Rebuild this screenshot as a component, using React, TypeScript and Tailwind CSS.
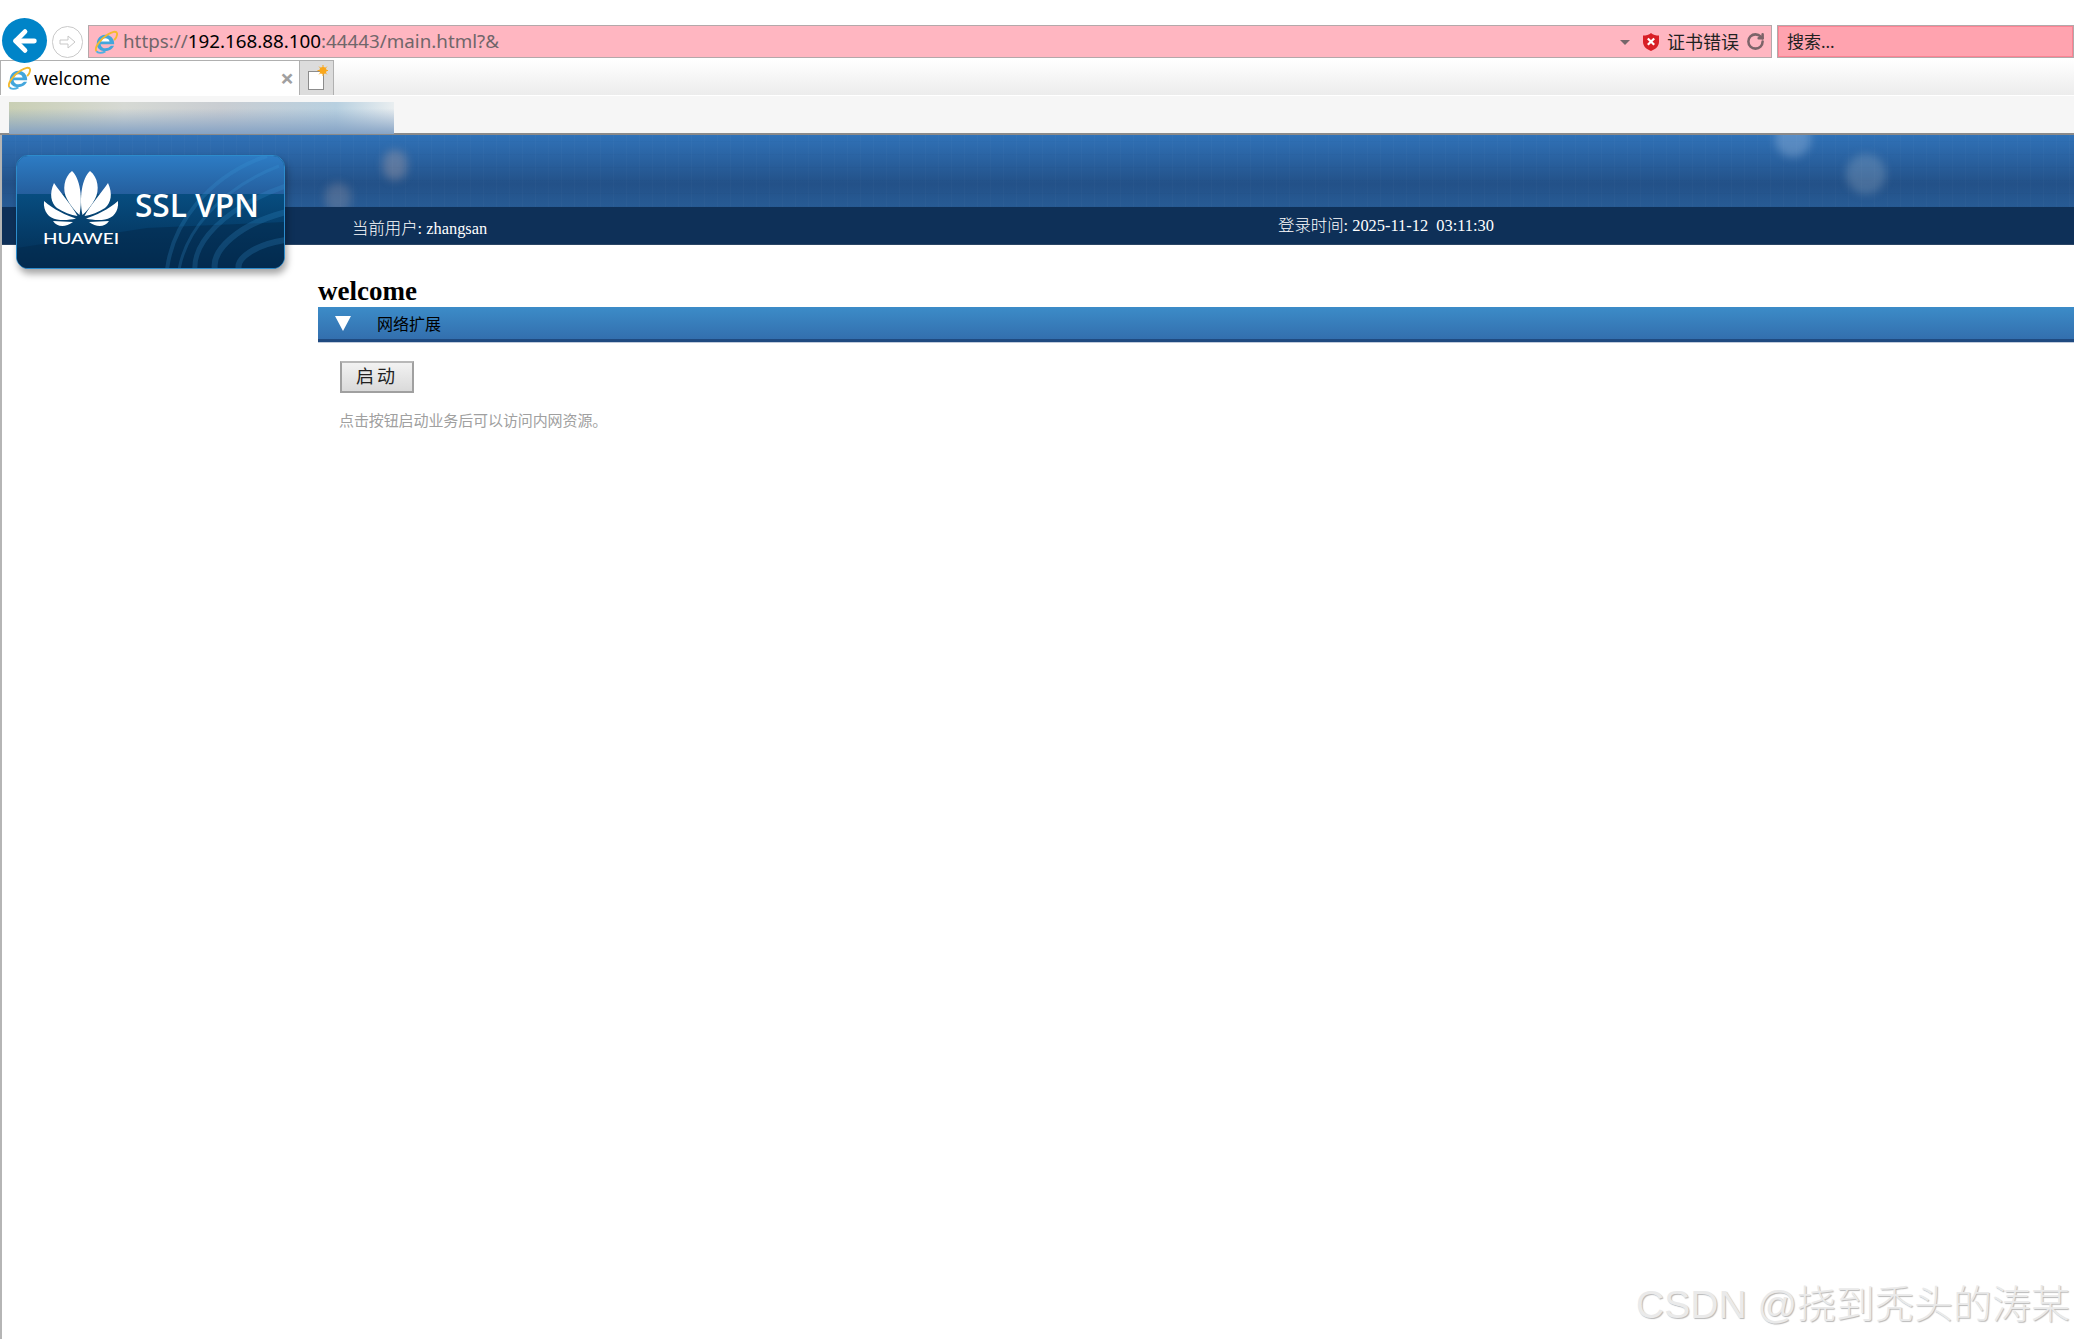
import React from 'react';
import { ArrowLeft, RotateCw } from 'lucide-react';

const uiFont = "font-['Noto_Sans','Noto_Sans_CJK_SC',sans-serif]";
const pageFont = "font-['Liberation_Serif','Noto_Sans_CJK_SC',serif]";

function IeIcon() {
  return (
    <svg width="24" height="24" viewBox="1.5 1 22 22" className="shrink-0">
      <path d="M5 9.5A8 8 0 0 1 19 9.5C19.8 11 20 12.6 20 14H7.5C8 18.5 14 19 17 15.5H19.8C17 22.5 4 22 4 13.5 4 12 4.4 10.7 5 9.5Z" fill="#43a6dc" />
      <path d="M8 11.5C8.5 7.5 15 7.5 15.8 11.5Z" fill="#fff" />
      <path d="M3.8 20.5C1 16.5 9 8.5 14 5.2 18 2.5 22 1.5 22.6 4 23 6 21.5 8.5 20 10.2" fill="none" stroke="#f4b92d" strokeWidth="1.7" />
      <path d="M3.8 20.5C5 22.6 9 22.2 12 20.6" fill="none" stroke="#4fb0e2" strokeWidth="1.7" />
    </svg>
  );
}

function BrowserChrome() {
  return (
    <div className={`flex flex-col ${uiFont}`}>
      {/* address row */}
      <div className="h-[60px] flex items-start gap-[5px] pl-[2px] bg-white">
        <div className="mt-[18px] w-[45px] h-[45px] rounded-full bg-[#0084c8] flex items-center justify-center shrink-0 z-10">
          <ArrowLeft size={32} strokeWidth={3.6} color="#fff" />
        </div>
        <div className="mt-[26px] w-[31px] h-[32px] rounded-full border border-[#c9c9c9] flex items-center justify-center shrink-0">
          <svg width="20" height="20" viewBox="0 0 20 20" fill="none" stroke="#c8c8c8" strokeWidth="1">
            <path d="M2 8H10V4L17 10 10 16V12H2Z" />
          </svg>
        </div>
        <div className="mt-[25px] w-[1684px] h-[33px] bg-[#ffb6c1] border border-[#b4a8aa] flex items-center pl-[5px] shrink-0">
          <IeIcon />
          <span className="ml-[5px] text-[18.8px] text-[#70666a]">
            https://<span className="text-black">192.168.88.100</span>:44443/main.html?&amp;
          </span>
          <div className="ml-auto flex items-center">
            <span className="w-0 h-0 border-x-[5px] border-x-transparent border-t-[5px] border-t-[#75666a] mt-[2px]" />
            <svg width="18" height="20" viewBox="0 0 18 20" className="ml-[12px]">
              <path d="M9 1C11 3 14 3.5 17 3.5V10C17 14.5 13 17.5 9 19 5 17.5 1 14.5 1 10V3.5C4 3.5 7 3 9 1Z" fill="#d81f26" />
              <path d="M5.8 6.5 12.2 12.8M12.2 6.5 5.8 12.8" stroke="#fff" strokeWidth="2.2" />
            </svg>
            <span className="ml-[7px] pt-[1px] text-[18px] text-[#222]">证书错误</span>
            <RotateCw size={19} strokeWidth={3.2} color="#7c6469" className="ml-[7px] mr-[6px]" />
          </div>
        </div>
        <div className="mt-[25px] flex-1 h-[33px] bg-[#ffa3af] border border-[#b4a8aa] outline outline-1 -outline-offset-2 outline-[#fb8393] flex items-center pl-[9px] pt-[1px] text-[17px] text-[#222]">
          搜索...
        </div>
      </div>
      {/* tab row */}
      <div className="h-[35px] flex bg-[linear-gradient(#ffffff,#ececec)]">
        <div className="w-[299px] bg-white border-t border-l border-[#b0b0b0] flex items-center pl-[6px] pr-[5px]">
          <IeIcon />
          <span className="ml-[3px] text-[18.2px] leading-none text-black">welcome</span>
          <span className="ml-auto text-[#a0a0a0] text-[24px] font-bold leading-none">×</span>
        </div>
        <div className="w-[35px] bg-[#dcdcdc] border-x border-t border-[#b0b0b0] flex items-center justify-center">
          <svg width="22" height="26" viewBox="0 0 22 26">
            <rect x="2.5" y="6.5" width="15" height="18" fill="#fff" stroke="#8c8c8c" />
            <circle cx="17" cy="5.5" r="3.6" fill="#f9a71c" />
            <path d="M17 0V11M11.5 5.5H22.5M13.2 1.7 20.8 9.3M20.8 1.7 13.2 9.3" stroke="#f9a71c" strokeWidth="1" />
          </svg>
        </div>
      </div>
      {/* favourites row */}
      <div className="h-[40px] bg-[#f6f6f6] border-t border-white border-b-2 border-b-[#8a8a8a] pt-[6px] pl-[9px]">
        <div className="w-[385px] h-[32px] bg-[linear-gradient(90deg,#c9cfb4_0%,#d6d9d4_30%,#c9cdd2_55%,#b8d0e0_85%,#e9eef0_100%)] relative overflow-hidden">
          <div className="absolute inset-0 bg-[linear-gradient(rgba(130,160,195,0)_20%,rgba(130,160,195,0.95)_100%)]" />
        </div>
      </div>
    </div>
  );
}

function Logo() {
  return (
    <div className="absolute left-[14px] top-[20px] w-[269px] h-[114px] rounded-[12px] overflow-hidden shadow-[2px_5px_7px_rgba(0,0,0,0.35)] border border-[#2d8ccc] bg-[#04345f]">
      <svg width="269" height="114" viewBox="0 0 269 114" className="block">
        <defs>
          <linearGradient id="logoTop" x1="0" y1="0" x2="0" y2="1">
            <stop offset="0" stopColor="#2d7cc4" />
            <stop offset="1" stopColor="#255f9e" />
          </linearGradient>
          <linearGradient id="logoBottom" x1="0" y1="0" x2="0" y2="1">
            <stop offset="0" stopColor="#074d80" />
            <stop offset="1" stopColor="#032b50" />
          </linearGradient>
          <g id="petals">
            <path d="M65.5 59C62 42 65 22 73 15 81 21 83 34 78 43 75 49 70 55 65.5 59Z" />
            <path d="M67.5 60C73 50 84 37 91 27 96 38 94 47 88 52 82 56 74 59 67.5 60Z" />
            <path d="M69 62.5C78 60 92 53 101 45 102 56 96 62 88 63.5 82 64.5 75 64 69 62.5Z" />
            <path d="M72 66 92 65C88 71 80 72 72 66Z" />
          </g>
        </defs>
        <rect width="269" height="38" fill="url(#logoTop)" />
        <rect y="38" width="269" height="76" fill="url(#logoBottom)" />
        <path d="M0 114V92L130 72 269 66V114Z" fill="#03294c" opacity="0.55" />
        <g fill="none" stroke="#3b9bd8" opacity="0.22">
          <path d="M150 114C155 70 190 20 250 0" strokeWidth="4" />
          <path d="M162 114C168 78 200 34 262 10" strokeWidth="3" />
          <path d="M178 114C176 88 205 52 269 30" strokeWidth="5" />
          <path d="M198 114C194 94 222 68 269 56" strokeWidth="6" />
          <path d="M222 114C218 102 240 88 269 84" strokeWidth="6" />
        </g>
        <g fill="#fff">
          <use href="#petals" />
          <use href="#petals" transform="translate(128 0) scale(-1 1)" />
        </g>
        <text x="26" y="88" fontFamily="Lato, sans-serif" fontSize="15.5" fontWeight="500" fill="#fff" textLength="76" lengthAdjust="spacingAndGlyphs">HUAWEI</text>
        <text x="118" y="61" fontFamily="'Open Sans', sans-serif" fontSize="33" fontWeight="600" fill="#fff" textLength="124" lengthAdjust="spacingAndGlyphs">SSL VPN</text>
      </svg>
    </div>
  );
}

function Header() {
  return (
    <div className={`relative h-[110px] flex flex-col ${pageFont}`}>
      <div className="relative flex-1 overflow-hidden bg-[linear-gradient(#3072b8,#235188_68%,#275b95)]">
        <div className="absolute inset-0 bg-[repeating-linear-gradient(90deg,rgba(255,255,255,0.018)_0_1px,transparent_1px_13px),repeating-linear-gradient(0deg,rgba(0,0,0,0.02)_0_1px,transparent_1px_13px)]" />
        <div className="absolute left-[381px] top-[15px] w-[24px] h-[30px] rounded-full bg-[rgba(190,170,170,0.35)] blur-[4px]" />
        <div className="absolute left-[323px] top-[48px] w-[26px] h-[30px] rounded-full bg-[rgba(190,170,170,0.25)] blur-[4px]" />
        <div className="absolute left-[1773px] top-[-14px] w-[36px] h-[36px] rounded-full bg-[rgba(170,195,225,0.35)] blur-[4px]" />
        <div className="absolute left-[1844px] top-[19px] w-[40px] h-[40px] rounded-full bg-[rgba(170,185,205,0.28)] blur-[4px]" />
      </div>
      <div className="h-[38px] bg-[#0e3058] border-b border-b-[#2a4565] text-white text-[16.4px] font-light flex">
        <div className="w-[350px] shrink-0" />
        <span className="pt-[10px] w-[926px] shrink-0">当前用户: zhangsan</span>
        <span className="pt-[7px] whitespace-pre">登录时间: 2025-11-12  03:11:30</span>
      </div>
      <Logo />
    </div>
  );
}

function Content() {
  return (
    <div className={`flex-1 flex ${pageFont}`}>
      <div className="w-[316px] shrink-0" />
      <div className="flex-1 pt-[31px]">
        <h1 className="text-[27px] leading-[31px] font-bold text-black">welcome</h1>
        <div className="h-[35px] bg-[linear-gradient(#3c8cc8,#336fae)] border-b-[3px] border-b-[#1f4a80] shadow-[0_1px_0_#c0cbdc] flex items-center">
          <svg width="18" height="17" viewBox="0 0 18 17" className="ml-[16px]">
            <path d="M1 1H17L9 16Z" fill="#fff" />
          </svg>
          <span className="ml-[25px] pt-[4px] text-[16px] text-black">网络扩展</span>
        </div>
        <div className="pl-[22px] pt-[19px]">
          <button className="w-[74px] h-[32px] border-2 border-[#a0a0a0] border-t-[#b8b8b8] bg-[linear-gradient(#f2f2f2,#dadada)] text-[18px] text-[#222] tracking-[3px]">
            启动
          </button>
          <p className="-ml-[1px] mt-[18px] text-[15px] leading-[20px] tracking-[-0.1px] text-[#a0a0a0]">点击按钮启动业务后可以访问内网资源。</p>
        </div>
      </div>
    </div>
  );
}

export default function App() {
  return (
    <div className="relative w-[2074px] h-[1339px] overflow-hidden bg-white flex flex-col">
      <BrowserChrome />
      <div className="flex-1 flex flex-col border-l-2 border-l-[#b5b5b5]">
        <Header />
        <Content />
      </div>
      <div className="absolute right-[4px] bottom-[9px] font-['Liberation_Sans','Noto_Sans_CJK_SC',sans-serif] font-light text-[39px] leading-[50px] text-[#eaeaea] [text-shadow:1px_1px_1px_#b8b8b8]">
        CSDN @挠到秃头的涛某
      </div>
    </div>
  );
}
